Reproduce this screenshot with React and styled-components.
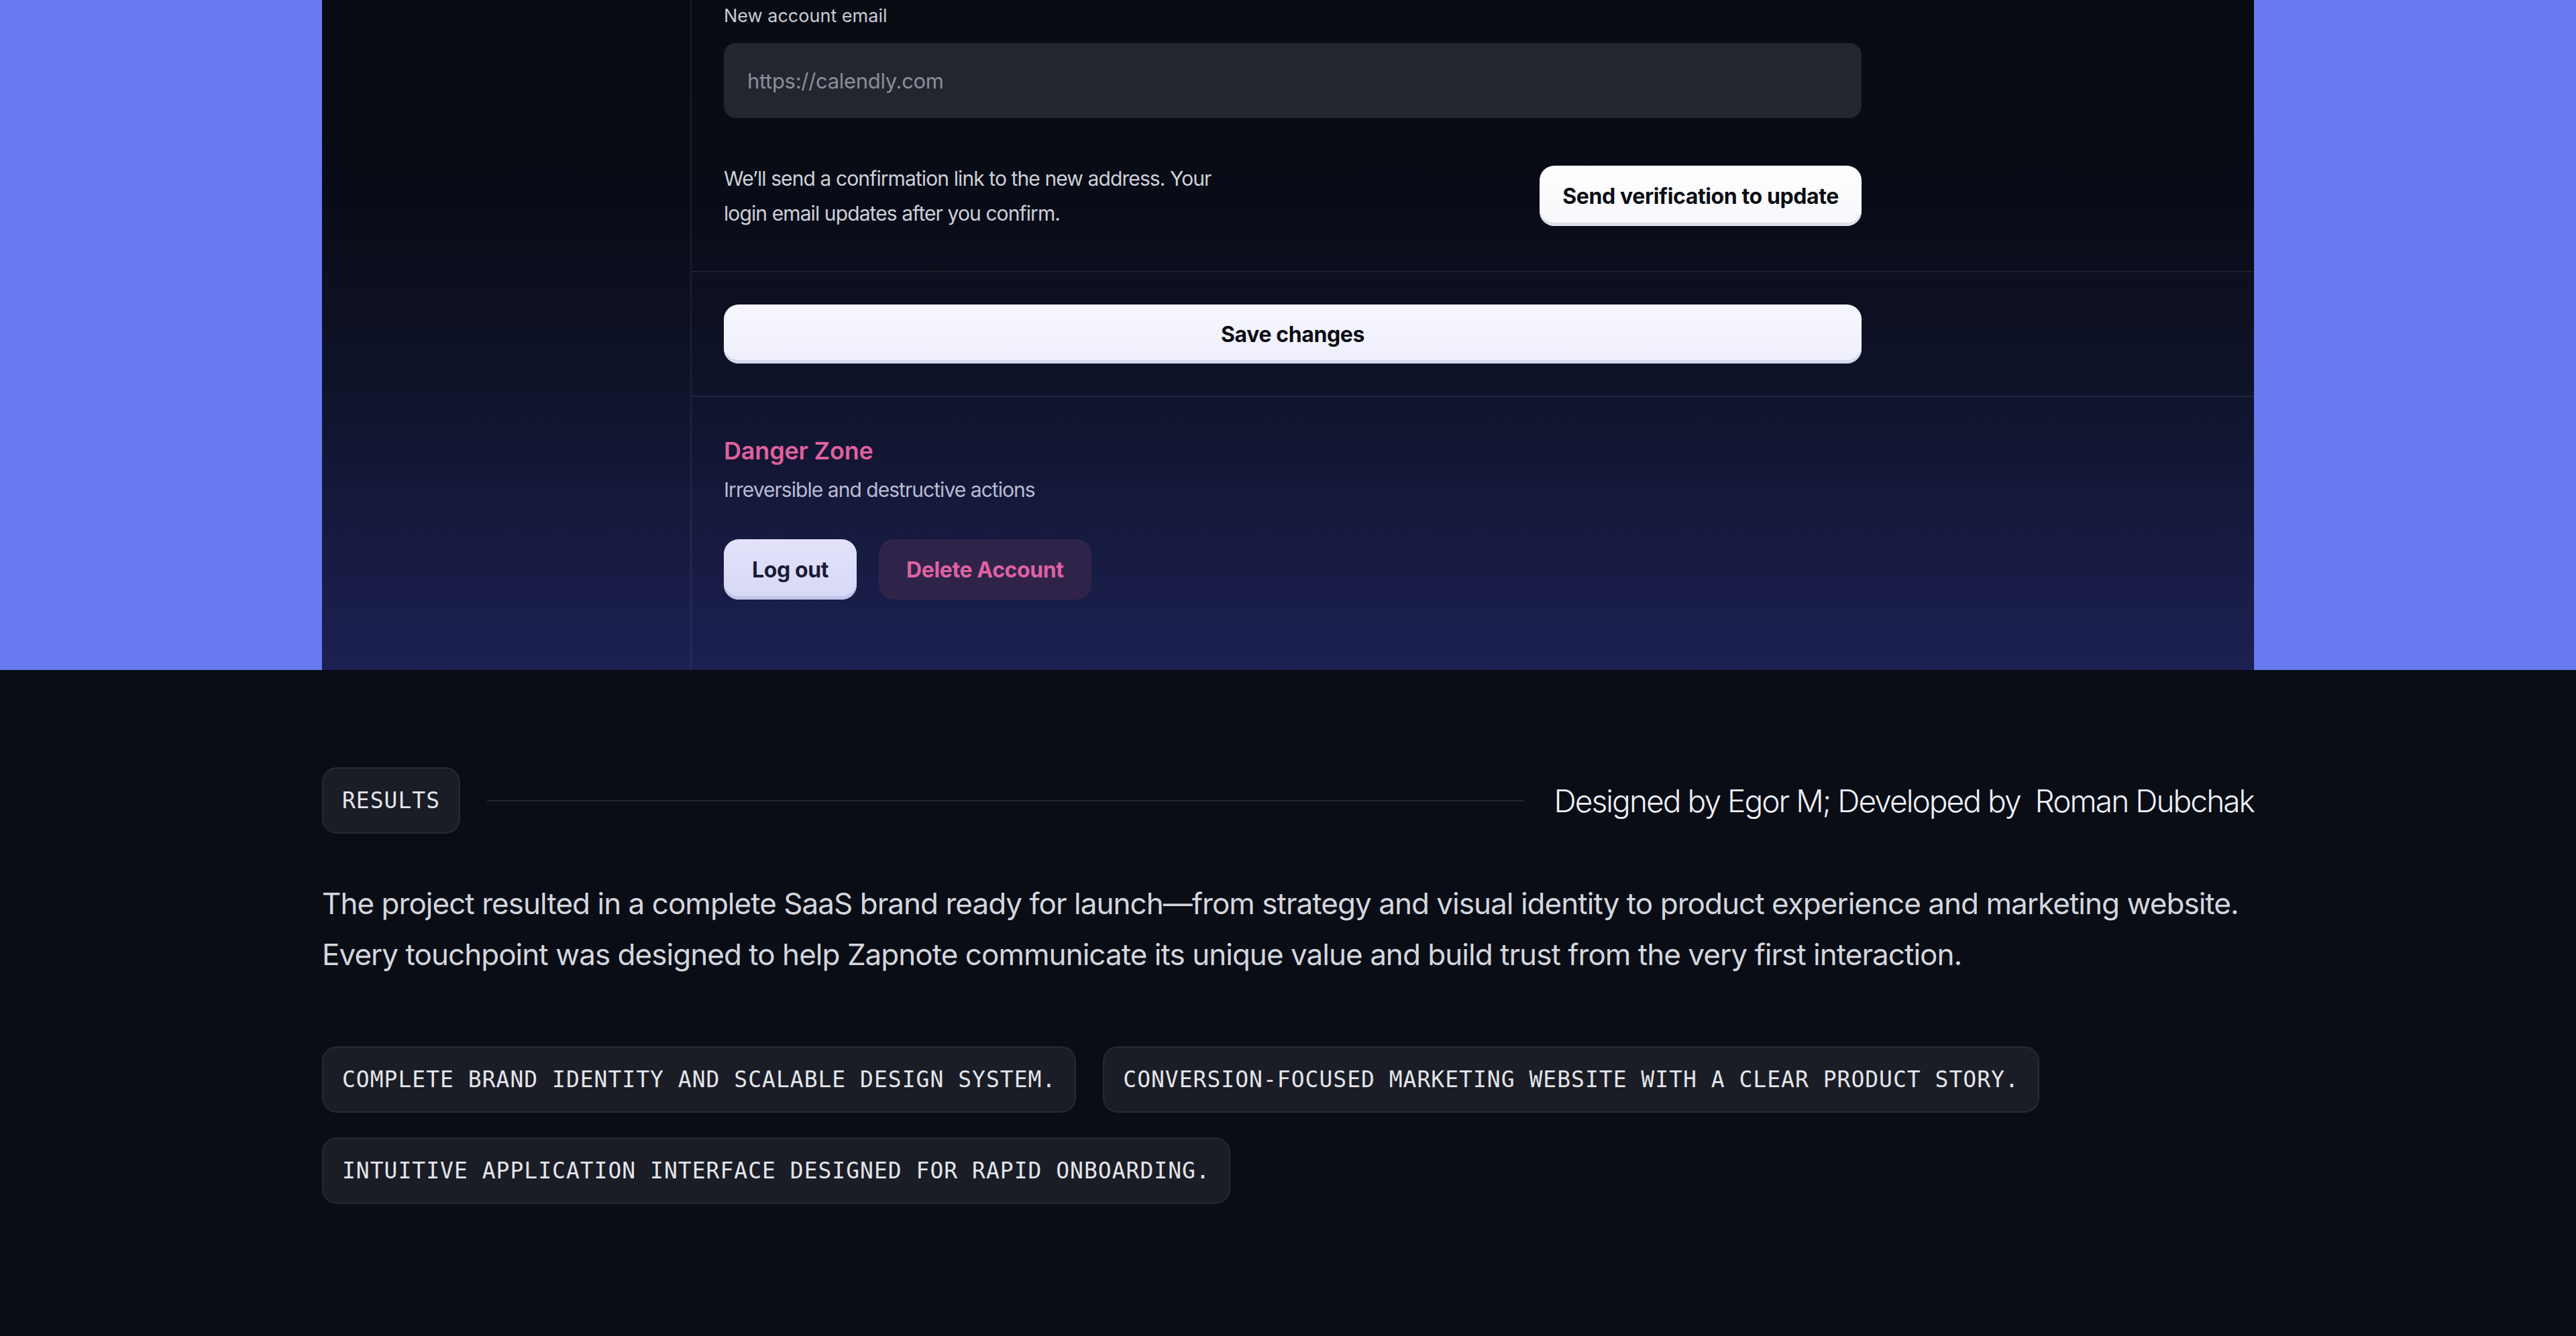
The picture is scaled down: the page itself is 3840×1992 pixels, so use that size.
import React from 'react';
import styled, { createGlobalStyle } from 'styled-components';

const GlobalStyle = createGlobalStyle`
  html, body {
    margin: 0;
    padding: 0;
    background: #0a0d16;
  }
  body {
    font-family: Inter, "Noto Sans", sans-serif;
    -webkit-font-smoothing: antialiased;
  }
  *, *::before, *::after { box-sizing: border-box; }
`;

/* ---------- settings preview on the blue backdrop ---------- */

const Showcase = styled.section`
  background: #687af0;
  display: flex;
  justify-content: center;
`;

const Panel = styled.div`
  width: 2880px;
  height: 999px;
  display: grid;
  grid-template-columns: 551px 1fr;
  overflow: hidden;
  background: linear-gradient(
    180deg,
    #080b12 0%,
    #090c16 30%,
    #10142c 60%,
    #171b42 82%,
    #1c2052 100%
  );
`;

const Sidebar = styled.aside`
  border-right: 2px solid rgba(255, 255, 255, 0.07);
`;

const Main = styled.div`
  display: flex;
  flex-direction: column;
`;

const Block = styled.div`
  padding: ${(p) => p.$pad};
  padding-left: 48px;
  border-bottom: ${(p) => (p.$divider ? '2px solid rgba(255, 255, 255, 0.08)' : 'none')};
`;

const Column = styled.div`
  width: 1696px;
  display: flex;
  flex-direction: column;
`;

const FieldLabel = styled.label`
  font-size: 27px;
  line-height: 40px;
  letter-spacing: 0;
  color: #c9cbd6;
  margin-bottom: 20px;
`;

const TextInput = styled.input`
  height: 112px;
  border: none;
  outline: none;
  border-radius: 18px;
  background: #23262f;
  padding: 0 35px;
  font-family: inherit;
  font-size: 31px;
  letter-spacing: -0.01em;
  color: #e6e7ee;
  &::placeholder { color: #8b8e99; }
`;

const ConfirmRow = styled.div`
  margin-top: 64px;
  display: flex;
  align-items: center;
  justify-content: space-between;
`;

const Note = styled.p`
  margin: 0;
  max-width: 745px;
  font-size: 30px;
  line-height: 52px;
  letter-spacing: -0.03em;
  color: #cdd0da;
`;

const LightButton = styled.button`
  height: ${(p) => p.$h || 90}px;
  padding: 0 ${(p) => p.$px || 34}px;
  border: none;
  border-radius: 22px;
  background: ${(p) => p.$bg || 'linear-gradient(180deg, #ffffff 0%, #f7f7fc 100%)'};
  box-shadow: inset 0 -5px 0 ${(p) => p.$edge || '#dedfe9'};
  font-family: inherit;
  font-size: 32px;
  font-weight: 700;
  letter-spacing: -0.012em;
  color: ${(p) => p.$ink || '#0b0d14'};
  cursor: pointer;
  width: ${(p) => (p.$block ? '100%' : 'auto')};
`;

const DangerTitle = styled.h3`
  margin: 0;
  font-size: 36px;
  line-height: 48px;
  font-weight: 600;
  letter-spacing: -0.005em;
  color: #e0619f;
`;

const DangerText = styled.p`
  margin: 14px 0 0;
  font-size: 30px;
  line-height: 40px;
  letter-spacing: -0.032em;
  color: #b9bcd3;
`;

const ActionRow = styled.div`
  margin-top: 54px;
  display: flex;
  gap: 33px;
`;

const GhostDanger = styled.button`
  height: 90px;
  padding: 0 41px;
  border: none;
  border-radius: 22px;
  background: #2f2349;
  font-family: inherit;
  font-size: 32px;
  font-weight: 700;
  letter-spacing: -0.012em;
  color: #de62a3;
  cursor: pointer;
`;

/* ---------- results write-up ---------- */

const Results = styled.section`
  width: 2880px;
  margin: 0 auto;
  padding: 145px 0 197px;
`;

const HeaderRow = styled.div`
  display: flex;
  align-items: center;
  gap: 40px;
`;

const Chip = styled.span`
  display: inline-flex;
  align-items: center;
  height: 99px;
  padding: 0 28px;
  border-radius: 22px;
  background: #1b1d26;
  border: 2px solid #262933;
  font-family: "DejaVu Sans Mono", "Liberation Mono", monospace;
  font-size: 33px;
  letter-spacing: 1px;
  color: #e3e5ea;
  text-transform: uppercase;
  white-space: nowrap;
`;

const Rule = styled.div`
  flex: 1;
  height: 2px;
  background: #23262e;
`;

const Credit = styled.p`
  margin: 0 0 0 4px;
  font-size: 46px;
  font-weight: 300;
  letter-spacing: -0.042em;
  color: #eef0f5;
  white-space: pre;
`;

const Summary = styled.p`
  margin: 66px 0 0;
  font-size: 44px;
  line-height: 76px;
  letter-spacing: -0.022em;
  color: #d4d6dd;
`;

const TagList = styled.div`
  margin-top: 99px;
  display: flex;
  flex-wrap: wrap;
  gap: 37px 40px;
`;

const outcomes = [
  'Complete brand identity and scalable design system.',
  'Conversion-focused marketing website with a clear product story.',
  'Intuitive application interface designed for rapid onboarding.',
];

export default function App() {
  return (
    <>
      <GlobalStyle />
      <Showcase>
        <Panel>
          <Sidebar />
          <Main>
            <Block $pad="4px 0 60px" $divider>
              <Column>
                <FieldLabel htmlFor="new-email">New account email</FieldLabel>
                <TextInput id="new-email" placeholder="https://calendly.com" />
                <ConfirmRow>
                  <Note>
                    We’ll send a confirmation link to the new address. Your login email updates after
                    you confirm.
                  </Note>
                  <LightButton>Send verification to update</LightButton>
                </ConfirmRow>
              </Column>
            </Block>
            <Block $pad="48px 0 48px" $divider>
              <Column>
                <LightButton
                  $block
                  $h={88}
                  $bg="linear-gradient(180deg, #f6f7fe 0%, #eeeffb 100%)"
                  $edge="#d6d8ee"
                >
                  Save changes
                </LightButton>
              </Column>
            </Block>
            <Block $pad="56px 0 0">
              <Column>
                <DangerTitle>Danger Zone</DangerTitle>
                <DangerText>Irreversible and destructive actions</DangerText>
                <ActionRow>
                  <LightButton
                    $px={42}
                    $bg="linear-gradient(180deg, #e2e2fa 0%, #d7d8f5 100%)"
                    $edge="#c3c5ea"
                    $ink="#1a1c38"
                  >
                    Log out
                  </LightButton>
                  <GhostDanger>Delete Account</GhostDanger>
                </ActionRow>
              </Column>
            </Block>
          </Main>
        </Panel>
      </Showcase>

      <Results>
        <HeaderRow>
          <Chip>Results</Chip>
          <Rule />
          <Credit>Designed by Egor M; Developed by  Roman Dubchak</Credit>
        </HeaderRow>
        <Summary>
          The project resulted in a complete SaaS brand ready for launch—from strategy and visual
          identity to product experience and marketing website. Every touchpoint was designed to help
          Zapnote communicate its unique value and build trust from the very first interaction.
        </Summary>
        <TagList>
          {outcomes.map((t) => (
            <Chip key={t}>{t}</Chip>
          ))}
        </TagList>
      </Results>
    </>
  );
}
